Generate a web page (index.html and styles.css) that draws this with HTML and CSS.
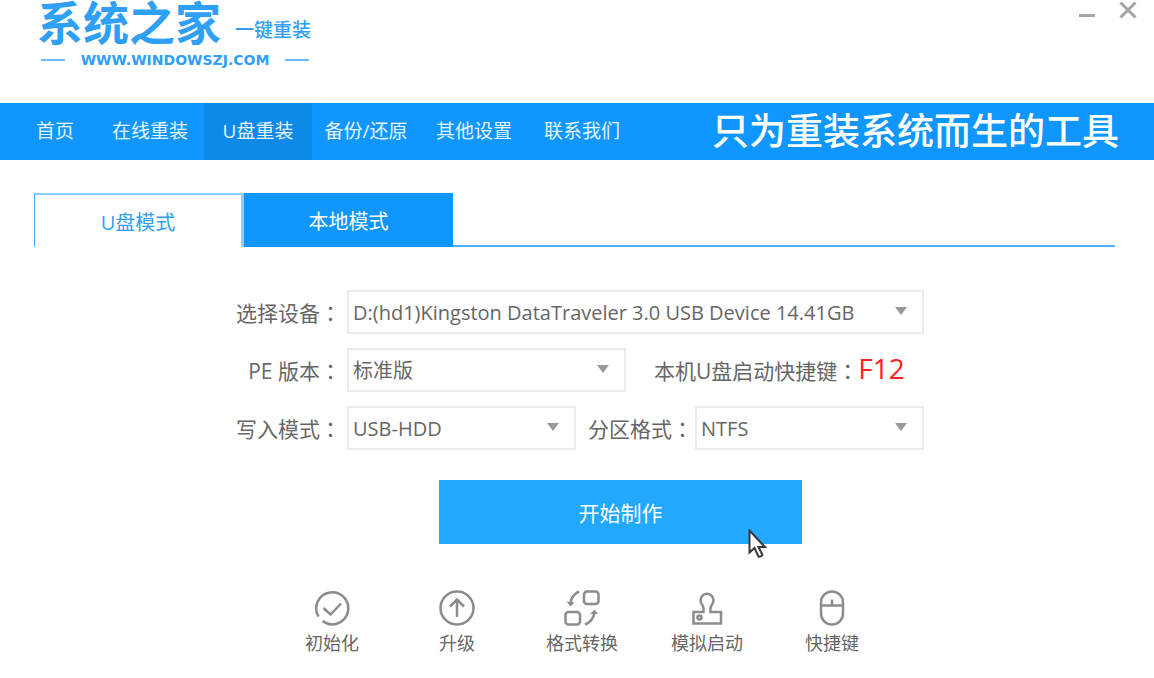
FILE: index.html
```html
<!DOCTYPE html>
<html lang="zh-CN">
<head>
  <meta charset="UTF-8">
  <meta name="viewport" content="width=device-width, initial-scale=1.0">
  <title>系统之家一键重装</title>
  <link rel="stylesheet" href="styles.css">
</head>
<body>
  <header class="header">
    <div class="logo">
      <div class="logo-top">
        <span class="logo-name">系统之家</span>
        <span class="logo-sub">一键重装</span>
      </div>
      <div class="logo-url">WWW.WINDOWSZJ.COM</div>
    </div>
    <div class="window-controls">
      <button type="button" aria-label="最小化">
        <svg width="18" height="18" viewBox="0 0 18 18"><path d="M1 14.500h16" /></svg>
      </button>
      <button type="button" aria-label="关闭">
        <svg width="18" height="18" viewBox="0 0 18 18"><path d="M1.500 1.500l15 15M16.500 1.500l-15 15" /></svg>
      </button>
    </div>
  </header>

  <nav class="navbar">
    <div class="nav-links">
      <a class="nav-home" href="#">首页</a>
      <a href="#">在线重装</a>
      <a class="active" href="#">U盘重装</a>
      <a href="#">备份/还原</a>
      <a href="#">其他设置</a>
      <a href="#">联系我们</a>
    </div>
    <div class="slogan">只为重装系统而生的工具</div>
  </nav>

  <main class="content">
    <div class="tabs" role="tablist">
      <button class="tab selected" type="button" role="tab" aria-selected="true">U盘模式</button>
      <button class="tab" type="button" role="tab" aria-selected="false">本地模式</button>
      <div class="tab-line"></div>
    </div>

    <form class="usb-form">
      <div class="row">
        <label for="device">选择设备<span lang="zh-TW" class="colon">：</span></label>
        <div class="select wide">
          <select id="device"><option>D:(hd1)Kingston DataTraveler 3.0 USB Device 14.41GB</option></select>
        </div>
      </div>
      <div class="row">
        <label for="pe">PE 版本<span lang="zh-TW" class="colon">：</span></label>
        <div class="select medium">
          <select id="pe"><option>标准版</option></select>
        </div>
        <p class="hotkey">本机U盘启动快捷键<span lang="zh-TW" class="colon">：</span><strong>F12</strong></p>
      </div>
      <div class="row">
        <label for="mode">写入模式<span lang="zh-TW" class="colon">：</span></label>
        <div class="select">
          <select id="mode"><option>USB-HDD</option></select>
        </div>
        <label for="format">分区格式<span lang="zh-TW" class="colon">：</span></label>
        <div class="select">
          <select id="format"><option>NTFS</option></select>
        </div>
      </div>
      <div class="action">
        <button class="start" type="button">开始制作</button>
        <svg class="pointer" width="19" height="30" viewBox="0 0 19 30">
          <path d="M1.500 1.500v22l5-4.500 4 8.500q2 1 4-1.500l-4-8h6.500z" />
        </svg>
      </div>
    </form>

    <div class="tools">
      <button class="tool" type="button">
        <svg width="36" height="36" viewBox="0 0 36 36">
          <path d="M4.500 26.500A16 16 0 1 1 8.500 31" />
          <path d="M9.500 18l7 6.500L27 13.500" />
        </svg>
        初始化
      </button>
      <button class="tool" type="button">
        <svg width="36" height="36" viewBox="0 0 36 36">
          <circle cx="18" cy="18" r="16.500" />
          <path d="M18 27V10M11 16.500l7-7 7 7" />
        </svg>
        升级
      </button>
      <button class="tool" type="button">
        <svg width="36" height="36" viewBox="0 0 36 36">
          <rect x="20" y="1.500" width="14.500" height="12.500" rx="3" />
          <rect x="1.500" y="22" width="14.500" height="12.500" rx="3" />
          <path d="M15 1.500Q7.500 5 6.500 13M21 34.500q8-3 9.500-12" />
          <path class="arrowhead" d="M2.500 11.500l8 1-4 4zM26 24l8 0-3.500-4.500z" />
        </svg>
        格式转换
      </button>
      <button class="tool" type="button">
        <svg width="36" height="36" viewBox="0 0 36 36">
          <path d="M4.500 22H14.500V18.500Q14.500 16.500 13 14.500A6.500 6.500 0 1 1 23 14.500Q21.500 16.500 21.500 18.500V22H32V33.500H4.500z" />
          <circle cx="10.500" cy="27.500" r="2" />
        </svg>
        模拟启动
      </button>
      <button class="tool" type="button">
        <svg width="36" height="36" viewBox="0 0 36 36">
          <rect x="7" y="1.500" width="22" height="33" rx="11" />
          <path d="M7 15.500h22M18 9.500v6" />
        </svg>
        快捷键
      </button>
    </div>
  </main>
</body>
</html>
```

FILE: styles.css
```css
* {
  box-sizing: border-box;
}

body {
  margin: 0;
  background: #fff;
  color: #666;
  font-family: "Open Sans", "Noto Sans CJK SC", sans-serif;
  font-size: 21px;
}

button {
  margin: 0;
  padding: 0;
  border: none;
  background: none;
  font-family: inherit;
  cursor: pointer;
}

/* header */
.header {
  display: flex;
  justify-content: space-between;
  align-items: flex-start;
  height: 103px;
  padding: 0 17px 0 37px;
}

.logo {
  color: #2f9ff8;
}

.logo-top {
  display: flex;
  align-items: flex-end;
  gap: 14px;
  height: 44px;
}

.logo-name {
  font-size: 46px;
  font-weight: bold;
  line-height: 44px;
}

.logo-sub {
  font-size: 19px;
  font-weight: 500;
  line-height: 28px;
}

.logo-url {
  display: flex;
  align-items: center;
  justify-content: space-between;
  height: 32px;
  padding: 0 2px 0 4px;
  font-family: "DejaVu Sans", sans-serif;
  font-size: 14px;
  font-weight: bold;
}

.logo-url::before,
.logo-url::after {
  content: "";
  width: 24px;
  height: 2px;
  background: #6dbcfb;
}

.window-controls {
  display: flex;
  gap: 23px;
  padding-top: 1px;
}

.window-controls svg {
  display: block;
  fill: none;
  stroke: #a5a5a5;
  stroke-width: 3;
}

/* navigation */
.navbar {
  display: flex;
  justify-content: space-between;
  height: 57px;
  padding: 0 35px 0 14px;
  background: #1096ff;
  color: #fff;
}

.nav-links {
  display: flex;
}

.nav-links a {
  width: 108px;
  color: #e6f4ff;
  font-size: 19px;
  line-height: 56px;
  text-align: center;
  text-decoration: none;
}

.nav-links .nav-home {
  width: 82px;
}

.nav-links .active {
  background: #0d89e8;
}

.slogan {
  font-size: 37px;
  font-weight: 500;
  line-height: 56px;
  white-space: nowrap;
}

/* tabs */
.content {
  padding: 33px 39px 0 34px;
}

.tabs {
  display: flex;
  height: 54px;
}

.tab {
  width: 209px;
  background: #1096ff;
  color: #fff;
  font-size: 20px;
}

.tab.selected {
  width: 210px;
  border: 1px solid #45adff;
  border-top: 2px solid #8fccff;
  border-right: 3px solid #8fccff;
  border-bottom: none;
  background: #fff;
  color: #2f9ff8;
}

.tab-line {
  flex: 1;
  border-bottom: 2px solid #4fb0ff;
}

/* form */
.usb-form {
  display: flex;
  flex-direction: column;
  gap: 14px;
  max-width: 699px;
  margin: 43px auto 0;
  padding-left: 6px;
}

.row {
  display: flex;
  align-items: center;
  height: 44px;
}

.row label {
  width: 116px;
  padding-right: 6px;
  line-height: 44px;
  text-align: right;
  white-space: nowrap;
}

.row .select + label {
  flex: 1;
  padding-right: 2px;
}

.colon {
  font-family: "Noto Sans CJK TC", sans-serif;
}

.select {
  position: relative;
  width: 229px;
  height: 44px;
}

.select.medium {
  width: 279px;
}

.select.wide {
  width: 577px;
}

.select::after {
  content: "";
  position: absolute;
  top: 17px;
  right: 17px;
  border: 6px solid transparent;
  border-top: 8px solid #999;
  border-bottom: none;
  pointer-events: none;
}

.select select {
  width: 100%;
  height: 100%;
  padding: 0 30px 0 4px;
  border: 2px solid #ebebeb;
  border-radius: 0;
  background: #fff;
  color: #666;
  font-family: inherit;
  font-size: 20px;
  appearance: none;
}

.hotkey {
  flex: 1;
  margin: 0 0 0 28px;
  line-height: 44px;
  white-space: nowrap;
}

.hotkey strong {
  color: #f22;
  font-size: 28px;
  font-weight: normal;
  line-height: 28px;
}

.action {
  position: relative;
  width: 363px;
  margin: 16px 0 0 208px;
}

.start {
  display: block;
  width: 100%;
  height: 64px;
  background: #22a8ff;
  color: #fff;
  font-size: 21px;
}

.pointer {
  position: absolute;
  right: 35px;
  bottom: -15px;
  fill: #fff;
  stroke: #34383f;
  stroke-width: 2;
}

/* bottom tools */
.tools {
  display: flex;
  justify-content: center;
  padding: 46px 0 20px 15px;
}

.tool {
  display: flex;
  flex-direction: column;
  align-items: center;
  gap: 4px;
  width: 125px;
  color: #666;
  font-size: 18px;
  line-height: 26px;
}

.tool svg {
  fill: none;
  stroke: #8c8c8c;
  stroke-width: 2.500;
}

.tool .arrowhead {
  fill: #8c8c8c;
  stroke: none;
}
```
